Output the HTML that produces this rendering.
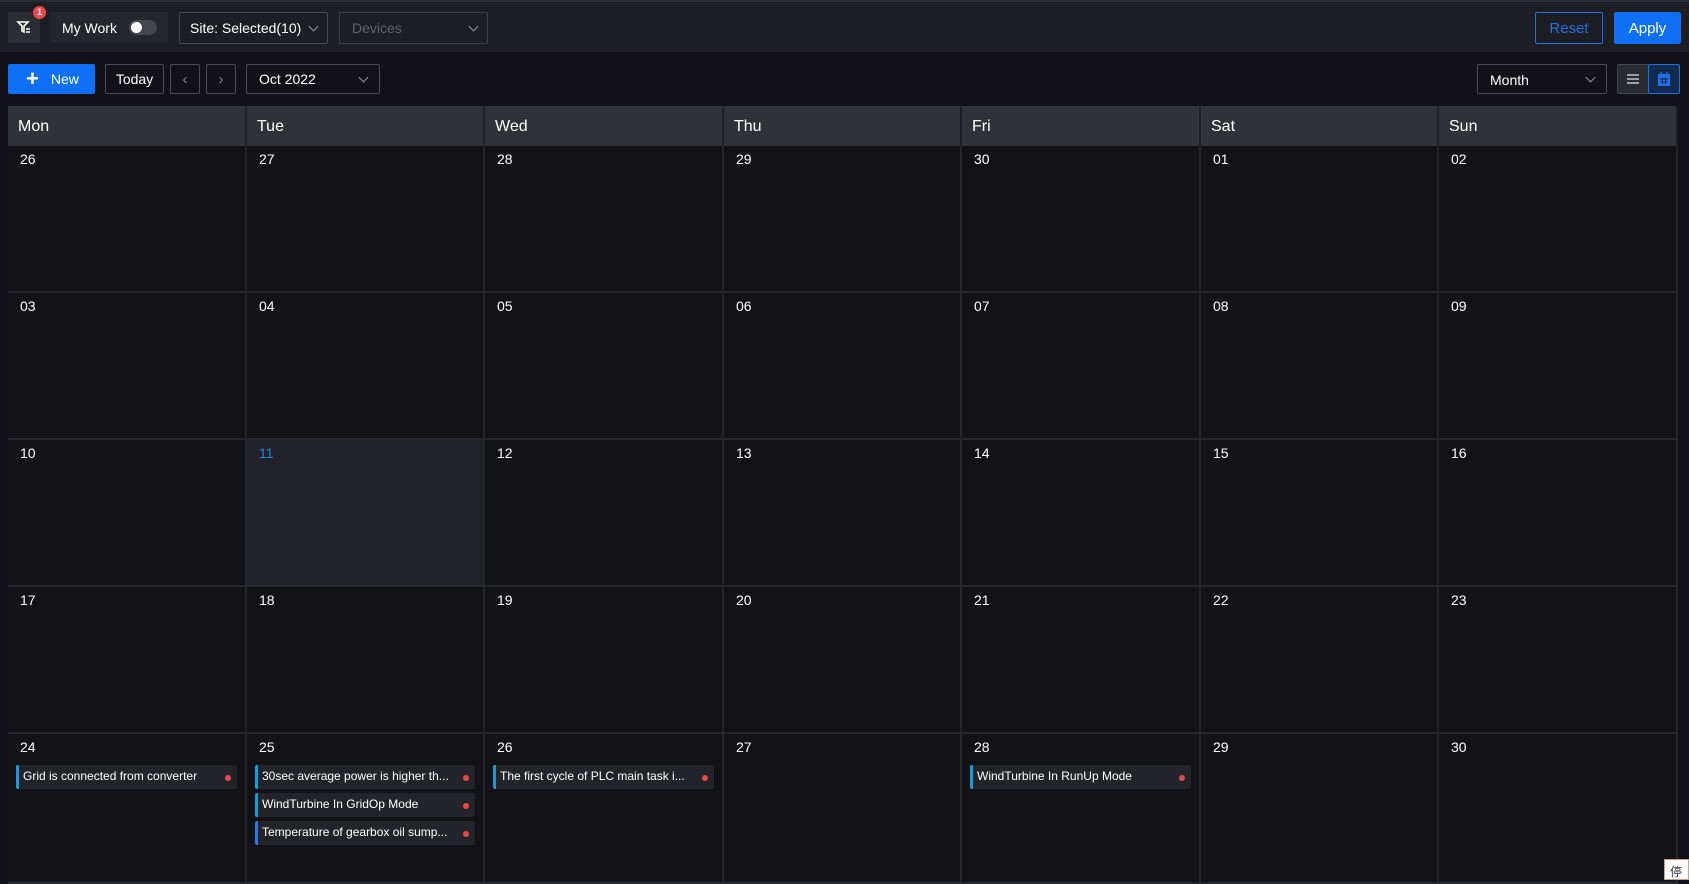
<!DOCTYPE html>
<html><head><meta charset="utf-8"><style>
*{box-sizing:border-box;margin:0;padding:0}
body{width:1689px;height:880px;overflow:hidden;background:#111117;font-family:"Liberation Sans",Arial,sans-serif;color:#fff;position:relative}
.a{position:absolute}
.top{left:0;top:0;width:1689px;height:52px;background:#1d1e24;border-top:2px solid #2a2b30}
.box{position:absolute;border:1px solid #4a4b52;border-radius:2px;display:flex;align-items:center;font-size:14px}
.chev{position:absolute;right:10px;top:50%;width:7px;height:7px;border-right:1.5px solid #9a9ba3;border-bottom:1.5px solid #9a9ba3;transform:translateY(-70%) rotate(45deg)}
.hdr{top:106px;height:40px;background:#313237;font-size:16px;padding:12px 0 0 10px;border-right:2px solid #1e1f24}
.cell{border-right:2px solid #26272c;border-bottom:2px solid #26272c;background:#121217;font-size:14px;padding:5px 0 0 12px}
.ev{position:absolute;left:8px;right:8px;height:24px;background:#232429;border-left:3px solid #1a9ad6;border-radius:2px;font-size:12px;line-height:23px;padding-left:4px;white-space:nowrap}
.ev:after{content:"";position:absolute;right:6px;top:10px;width:6px;height:6px;border-radius:50%;background:#e5484d}
</style></head><body>
<div class="a top"></div>
<div class="a" style="left:8px;top:12px;width:32px;height:31px;background:#2c2d33;border-radius:2px"></div>
<svg class="a" style="left:16px;top:19px" width="16" height="16" viewBox="0 0 16 16"><path d="M2 3h10l-4 4v6l-2-1V7z" fill="none" stroke="#fff" stroke-width="1.6"/><path d="M10 10h4M10 13h4" stroke="#fff" stroke-width="1.5"/></svg>
<div class="a" style="left:33px;top:6px;width:13px;height:13px;border-radius:50%;background:#e5484d;font-size:9px;font-weight:bold;text-align:center;line-height:13px">1</div>
<div class="a" style="left:50px;top:12px;width:118px;height:31px;background:#25262c;font-size:14px;line-height:32px;padding-left:12px">My Work</div>
<div class="a" style="left:129px;top:20px;width:28px;height:15px;border-radius:8px;background:#45464d"><div style="position:absolute;left:2px;top:2px;width:11px;height:11px;border-radius:50%;background:#fff"></div></div>
<div class="box" style="left:179px;top:12px;width:149px;height:32px;padding-left:10px">Site: Selected(10)<span class="chev"></span></div>
<div class="box" style="left:339px;top:12px;width:149px;height:32px;padding-left:12px;color:#5f6068;border-color:#3f4047">Devices<span class="chev"></span></div>
<div class="box" style="left:1535px;top:12px;width:68px;height:32px;justify-content:center;color:#1f6fe5;border-color:#1f6fe5;font-size:15px">Reset</div>
<div class="box" style="left:1614px;top:12px;width:67px;height:32px;justify-content:center;background:#0f6ff5;border-color:#0f6ff5;font-size:15px">Apply</div>

<div class="box" style="left:8px;top:64px;width:87px;height:30px;background:#0f6ff5;border-color:#0f6ff5;padding-left:17px"><span style="font-size:22px;font-weight:bold;margin-right:12px;line-height:20px">+</span>New</div>
<div class="box" style="left:105px;top:64px;width:59px;height:30px;justify-content:center">Today</div>
<div class="box" style="left:170px;top:64px;width:30px;height:30px;justify-content:center;color:#888;font-size:15px">‹</div>
<div class="box" style="left:206px;top:64px;width:30px;height:30px;justify-content:center;color:#888;font-size:15px">›</div>
<div class="box" style="left:246px;top:64px;width:134px;height:30px;padding-left:12px">Oct 2022<span class="chev" style="right:12px"></span></div>
<div class="box" style="left:1477px;top:64px;width:130px;height:30px;padding-left:12px;padding-top:2px">Month<span class="chev" style="right:12px"></span></div>
<div class="box" style="left:1617px;top:64px;width:32px;height:30px;background:#2a2b31;border-color:#45464d;justify-content:center"><svg width="14" height="12"><path d="M1 2h12M1 6h12M1 10h12" stroke="#9a9ba3" stroke-width="2"/></svg></div>
<div class="box" style="left:1648px;top:64px;width:32px;height:30px;background:#122a4d;border-color:#1f6fe5;justify-content:center"><svg width="14" height="15"><rect x="1" y="2" width="12" height="12" fill="#1f6fe5"/><path d="M4 0v3M10 0v3" stroke="#1f6fe5" stroke-width="1.5"/><path d="M3 7h8M3 10h8M5.5 6v6M8.5 6v6" stroke="#122a4d" stroke-width="1"/></svg></div>

<div id="g"></div>
<script>
var xs=[8,247,485,724,962,1201,1439,1678];
var days=["Mon","Tue","Wed","Thu","Fri","Sat","Sun"];
var nums=[["26","27","28","29","30","01","02"],["03","04","05","06","07","08","09"],["10","11","12","13","14","15","16"],["17","18","19","20","21","22","23"],["24","25","26","27","28","29","30"]];
var h="";
for(var c=0;c<7;c++){h+='<div class="a hdr" style="left:'+xs[c]+'px;width:'+(xs[c+1]-xs[c])+'px">'+days[c]+'</div>';}
for(var r=0;r<5;r++)for(var c=0;c<7;c++){
 var today=(r==2&&c==1);
 h+='<div class="a cell" style="left:'+xs[c]+'px;top:'+(146+r*147)+'px;width:'+(xs[c+1]-xs[c])+'px;height:'+(r==4?150:147)+'px;'+(today?'background:#222328;color:#1f7ff0':'')+'">'+nums[r][c];
 if(r==4){
  var ev=[];
  if(c==0)ev=["Grid is connected from converter"];
  if(c==1)ev=["30sec average power is higher th...","WindTurbine In GridOp Mode","Temperature of gearbox oil sump..."];
  if(c==2)ev=["The first cycle of PLC main task i..."];
  if(c==4)ev=["WindTurbine In RunUp Mode"];
  for(var i=0;i<ev.length;i++)h+='<div class="ev" style="top:'+(31+i*28)+'px;'+(c==1&&i==2?'border-left-color:#2f74e0':'')+'">'+ev[i]+'</div>';
 }
 h+='</div>';
}
h+='<div class="a" style="left:1664px;top:859px;width:25px;height:21px;background:#fff;border:1px solid #c9a08a;color:#333;font-size:12px;font-family:\'Liberation Sans\',\'Noto Sans CJK SC\',sans-serif;padding:3px 0 0 5px;overflow:hidden">停止</div>';
document.getElementById("g").innerHTML=h;
</script>
</body></html>
